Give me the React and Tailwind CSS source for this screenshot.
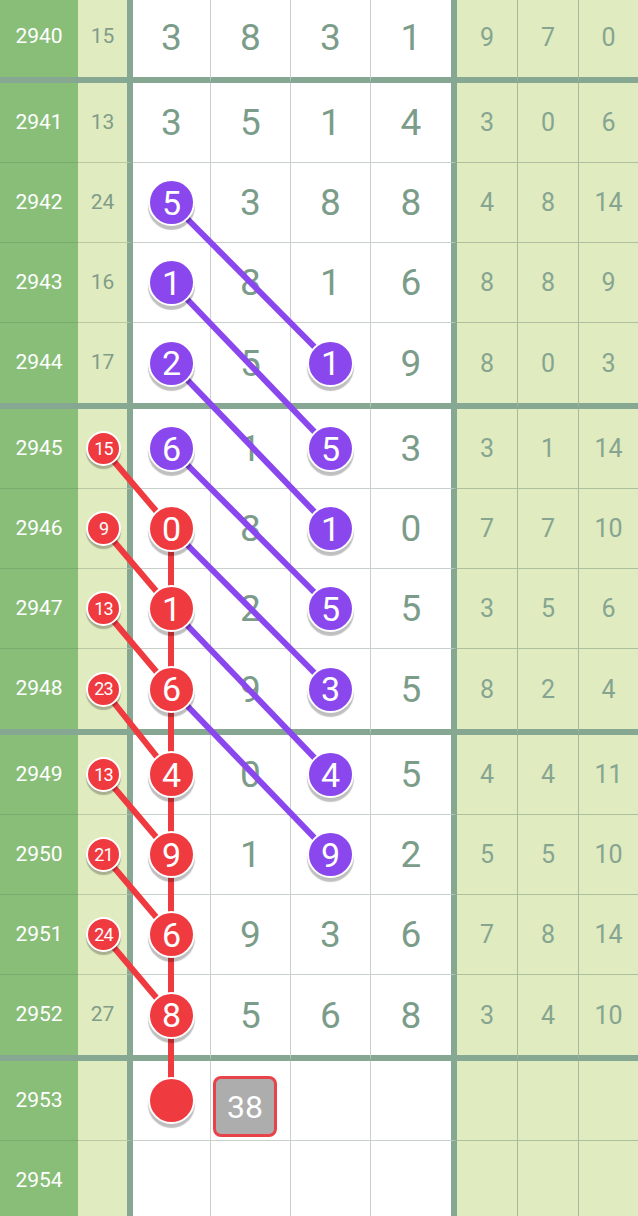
import React from 'react';

// draw chart rows: period, sum, four digits, three right stats
const rows = [
  { p: 2940, s: '15', d: [3, 8, 3, 1], r: [9, 7, 0] },
  { p: 2941, s: '13', d: [3, 5, 1, 4], r: [3, 0, 6] },
  { p: 2942, s: '24', d: [5, 3, 8, 8], r: [4, 8, 14], c1: ['p', 5] },
  { p: 2943, s: '16', d: [1, 8, 1, 6], r: [8, 8, 9], c1: ['p', 1] },
  { p: 2944, s: '17', d: [2, 5, 1, 9], r: [8, 0, 3], c1: ['p', 2], c3: 1 },
  { p: 2945, s: '15', d: [6, 1, 5, 3], r: [3, 1, 14], c1: ['p', 6], c3: 5, sb: true },
  { p: 2946, s: '9', d: [0, 8, 1, 0], r: [7, 7, 10], c1: ['r', 0], c3: 1, sb: true },
  { p: 2947, s: '13', d: [1, 2, 5, 5], r: [3, 5, 6], c1: ['r', 1], c3: 5, sb: true },
  { p: 2948, s: '23', d: [6, 9, 3, 5], r: [8, 2, 4], c1: ['r', 6], c3: 3, sb: true },
  { p: 2949, s: '13', d: [4, 0, 4, 5], r: [4, 4, 11], c1: ['r', 4], c3: 4, sb: true },
  { p: 2950, s: '21', d: [9, 1, 9, 2], r: [5, 5, 10], c1: ['r', 9], c3: 9, sb: true },
  { p: 2951, s: '24', d: [6, 9, 3, 6], r: [7, 8, 14], c1: ['r', 6], sb: true },
  { p: 2952, s: '27', d: [8, 5, 6, 8], r: [3, 4, 10], c1: ['r', 8] },
  { p: 2953, s: '', d: ['', '', '', ''], r: ['', '', ''], c1: ['r', ''], box: 38 },
  { p: 2954, s: '', d: ['', '', '', ''], r: ['', '', ''] },
];

const thick = [0, 4, 8, 12];

// row tops for the line overlay
const tops = [];
let acc = 0;
rows.forEach((_, i) => {
  tops.push(acc);
  acc += thick.includes(i) ? 86 : 80;
});
const cy = (i) => tops[i] + (thick.includes(i) ? 40 : 39.5);
const X = { sum: 103, c1: 171, c3: 330.5 };

function Ball({ color, v }) {
  const bg = color === 'p' ? 'bg-[#8a47ee]' : 'bg-[#ef3a40]';
  return (
    <div className={`relative z-20 flex h-[47px] w-[47px] items-center justify-center rounded-full border-2 border-white ${bg} text-[34px] leading-none text-white shadow-[0_4px_1px_rgba(0,0,0,0.25)]`}>
      {v}
    </div>
  );
}

function SmallBall({ v }) {
  return (
    <div className="relative z-20 ml-[2px] flex h-[35px] w-[35px] items-center justify-center rounded-full border-2 border-white bg-[#ef3a40] text-[18px] leading-none tracking-tighter text-white shadow-[0_3px_1px_rgba(0,0,0,0.25)]">
      {v}
    </div>
  );
}

export default function App() {
  return (
    <div className="h-[1216px] w-[638px] overflow-hidden bg-white" style={{ fontFamily: 'Roboto, "Noto Sans", sans-serif' }}>
      <div className="relative -mt-[3px]">
        {rows.map((row, i) => {
          const tk = thick.includes(i);
          const b = tk ? 'h-[86px] border-b-[6px] border-b-[#86a893]' : 'h-[80px] border-b';
          return (
            <div key={row.p} className="flex">
              <div className={`flex w-[78px] items-center justify-center bg-[#89be79] text-[21px] text-white ${b} ${tk ? '' : 'border-b-[#7aab6d]'}`}>
                {row.p}
              </div>
              <div className={`flex w-[55px] items-center justify-center border-r-[6px] border-r-[#86a893] bg-[#e0ebc0] text-[21px] text-[#7f9d88] ${b} ${tk ? '' : 'border-b-[#b9c9a4]'}`}>
                {row.sb ? <SmallBall v={row.s} /> : row.s}
              </div>
              {row.d.map((v, j) => {
                const w = ['w-[78px]', 'w-[80px]', 'w-[80px]', 'w-[86px]'][j];
                const br = j === 3 ? 'border-r-[6px] border-r-[#86a893]' : 'border-r border-r-[#c9d0cc]';
                let content = v;
                if (j === 0 && row.c1) content = <Ball color={row.c1[0]} v={row.c1[1]} />;
                if (j === 2 && row.c3 !== undefined) content = <Ball color="p" v={row.c3} />;
                if (j === 1 && row.box)
                  content = (
                    <div className="flex h-[61px] w-[64px] items-center justify-center rounded-[8px] border-[3px] border-[#e8434b] bg-[#adadad] text-[32px] leading-none text-white">
                      {row.box}
                    </div>
                  );
                return (
                  <div
                    key={j}
                    className={`flex ${w} items-center bg-white text-[37px] leading-none text-[#7c9c8a] ${br} ${b} ${tk ? '' : 'border-b-[#c9d0cc]'} ${j === 1 && row.box ? 'justify-start pl-[2px] pt-[12px]' : 'justify-center'}`}
                  >
                    {content}
                  </div>
                );
              })}
              {row.r.map((v, j) => (
                <div
                  key={j}
                  className={`flex ${j === 2 ? 'w-[59px]' : 'w-[61px] border-r border-r-[#a8b99c]'} items-center justify-center bg-[#e0ebc0] text-[25px] leading-none text-[#86a591] ${b} ${tk ? '' : 'border-b-[#aebf9f]'}`}
                >
                  {v}
                </div>
              ))}
            </div>
          );
        })}

        <svg className="pointer-events-none absolute left-0 top-0 z-10" width="638" height={acc}>
          {[2, 3, 4, 5, 6, 7, 8].map((i) => (
            <line key={'p' + i} x1={X.c1} y1={cy(i)} x2={X.c3} y2={cy(i + 2)} stroke="#8a47ee" strokeWidth="6" />
          ))}
          {[5, 6, 7, 8, 9, 10, 11].map((i) => (
            <line key={'s' + i} x1={X.sum} y1={cy(i)} x2={X.c1} y2={cy(i + 1)} stroke="#ef3a40" strokeWidth="6" />
          ))}
          {[6, 7, 8, 9, 10, 11, 12].map((i) => (
            <line key={'v' + i} x1={X.c1} y1={cy(i)} x2={X.c1} y2={cy(i + 1)} stroke="#ef3a40" strokeWidth="6" />
          ))}
        </svg>
      </div>
    </div>
  );
}
